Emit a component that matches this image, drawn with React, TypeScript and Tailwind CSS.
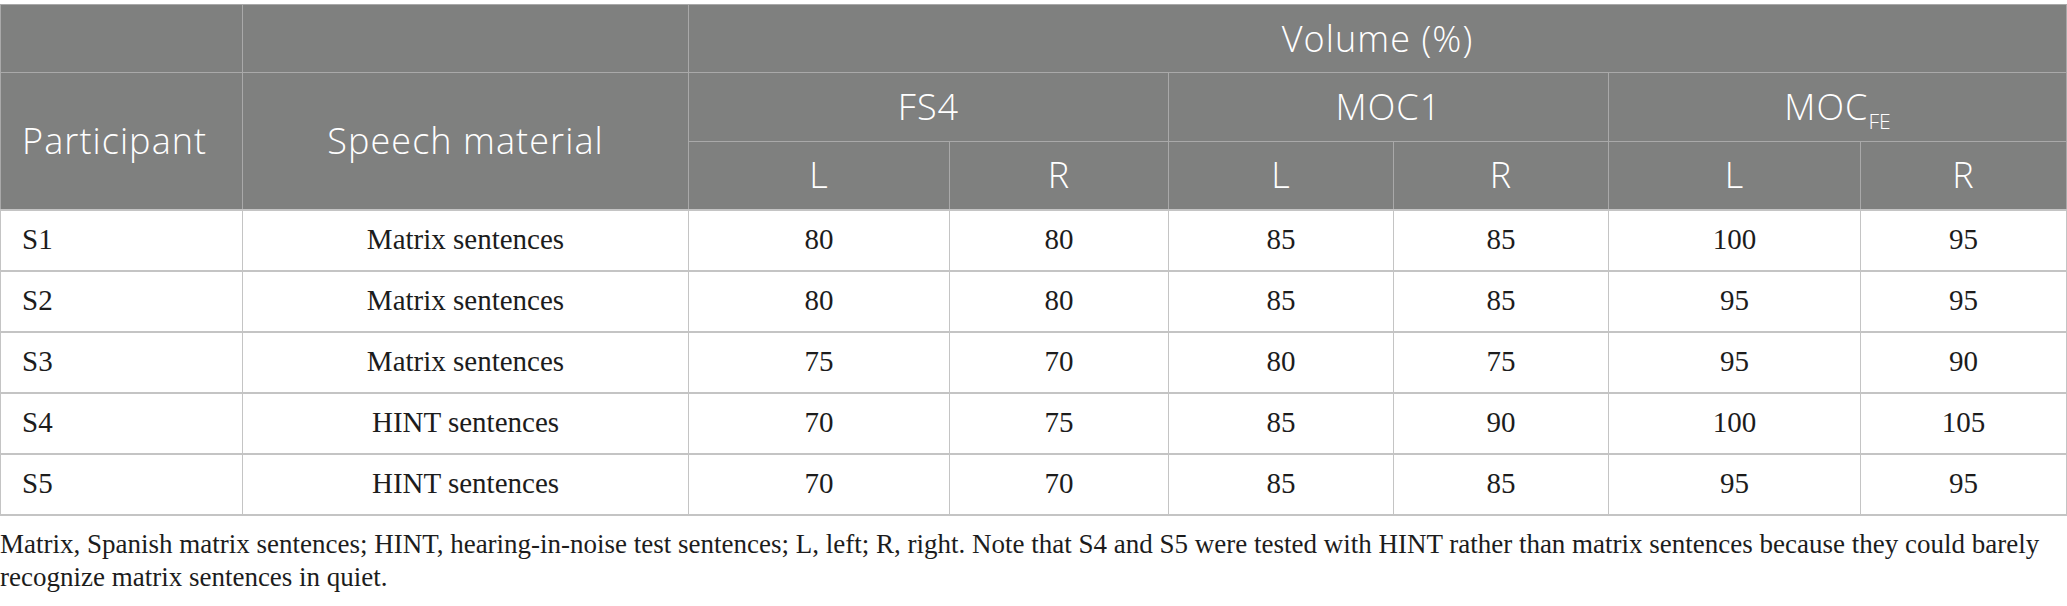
const rows = [
  { id: 'S1', material: 'Matrix sentences', values: ['80', '80', '85', '85', '100', '95'] },
  { id: 'S2', material: 'Matrix sentences', values: ['80', '80', '85', '85', '95', '95'] },
  { id: 'S3', material: 'Matrix sentences', values: ['75', '70', '80', '75', '95', '90'] },
  { id: 'S4', material: 'HINT sentences', values: ['70', '75', '85', '90', '100', '105'] },
  { id: 'S5', material: 'HINT sentences', values: ['70', '70', '85', '85', '95', '95'] },
];

const head = "border border-[#a9a9a9] text-white font-light text-center align-middle";
const cell = "border border-[#c4c4c4] text-[#1c1c1c] text-center align-middle";

export default function App() {
  return (
    <div className="bg-white w-[2067px] min-h-[606px] pt-[4px]">
      <table className="table-fixed border-collapse w-[2066px] bg-white">
        <colgroup>
          <col className="w-[242px]" />
          <col className="w-[446px]" />
          <col className="w-[261px]" />
          <col className="w-[219px]" />
          <col className="w-[225px]" />
          <col className="w-[215px]" />
          <col className="w-[252px]" />
          <col className="w-[206px]" />
        </colgroup>
        <thead className="bg-[#7f807f] font-['Open_Sans',sans-serif] text-[36px] tracking-[0.03em]">
          <tr className="h-[68px]">
            <th className={head}></th>
            <th className={head}></th>
            <th colSpan={6} className={head}>Volume (%)</th>
          </tr>
          <tr className="h-[69px]">
            <th rowSpan={2} className={`${head} text-left pl-[21px]`}>Participant</th>
            <th rowSpan={2} className={head}>Speech material</th>
            <th colSpan={2} className={head}>FS4</th>
            <th colSpan={2} className={head}>MOC1</th>
            <th colSpan={2} className={head}>
              MOC<sub className="text-[21px] tracking-normal align-baseline relative top-[9px]">FE</sub>
            </th>
          </tr>
          <tr className="h-[68px]">
            <th className={head}>L</th>
            <th className={head}>R</th>
            <th className={head}>L</th>
            <th className={head}>R</th>
            <th className={head}>L</th>
            <th className={head}>R</th>
          </tr>
        </thead>
        <tbody className="font-['Liberation_Serif',serif] text-[29px]">
          {rows.map((r) => (
            <tr key={r.id} className="h-[61px]">
              <td className={`${cell} border-y-2 text-left pl-[21px]`}>{r.id}</td>
              <td className={`${cell} border-y-2`}>{r.material}</td>
              {r.values.map((v, i) => (
                <td key={i} className={`${cell} border-y-2`}>{v}</td>
              ))}
            </tr>
          ))}
        </tbody>
      </table>
      <p className="mt-[12px] font-['Liberation_Serif',serif] text-[27px] leading-[33px] text-[#1c1c1c]">
        Matrix, Spanish matrix sentences; HINT, hearing-in-noise test sentences; L, left; R, right. Note that S4 and S5 were tested with HINT rather than matrix sentences because they could barely
        <br />
        recognize matrix sentences in quiet.
      </p>
    </div>
  );
}
